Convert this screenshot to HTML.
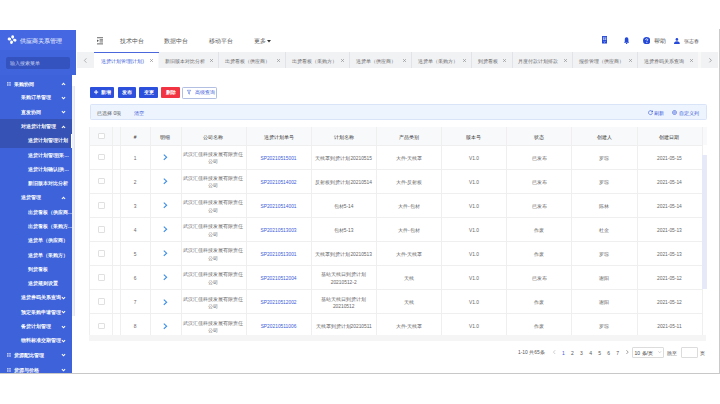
<!DOCTYPE html>
<html><head><meta charset="utf-8"><title>供应商关系管理</title>
<style>
*{box-sizing:border-box;margin:0;padding:0}
html,body{width:720px;height:404px;overflow:hidden;background:#fff;font-family:"Liberation Sans",sans-serif}
.a{position:absolute}
.t{position:absolute;white-space:nowrap;line-height:1}
.cell{position:absolute;line-height:7.5px;text-align:center;white-space:nowrap}
.cb{position:absolute;width:6.6px;height:6.6px;border:0.6px solid #e0e0e0;border-radius:1px;background:#fff}
.tofu .z{font-size:133.3%;line-height:0;position:relative;top:0.1em;-webkit-text-stroke:0.15px currentColor}
</style></head><body>
<div class="a" style="left:718.6px;top:29.4px;width:1.0px;height:344px;background:#cacaca;"></div>
<div class="a" style="left:0px;top:373px;width:720px;height:0.7px;background:#c8c8c8;"></div>
<div class="a" style="left:0px;top:29.5px;width:75.5px;height:20.2px;background:#4568e2;"></div>
<svg class="a" style="left:6px;top:33px;overflow:visible" width="12" height="13"><g fill="#fff"><ellipse cx="6.67" cy="3.91" rx="1.75" ry="1.45" transform="rotate(-78 6.67 3.91)"/><ellipse cx="8.79" cy="7.17" rx="1.75" ry="1.45" transform="rotate(12 8.79 7.17)"/><ellipse cx="5.53" cy="9.29" rx="1.75" ry="1.45" transform="rotate(102 5.53 9.29)"/><ellipse cx="3.41" cy="6.03" rx="1.75" ry="1.45" transform="rotate(192 3.41 6.03)"/></g></svg>
<div class="t" style="left:19.8px;top:37.75px;font-size:6.15px;color:#fff;"><span class="z">供应商关系管理</span></div>
<div class="a" style="left:0px;top:49.7px;width:75.5px;height:25.6px;background:#3f64dc;"></div>
<div class="a" style="left:6.2px;top:56.5px;width:63.4px;height:12.9px;background:#3553bf;border-radius:2px"></div>
<div class="t" style="left:10px;top:61.15px;font-size:5.3px;color:#c6d0ef;"><span class="z">输入搜索菜单</span></div>
<div class="a" style="left:0px;top:75.3px;width:71.8px;height:298px;background:#3d62d9;"></div>
<div class="a" style="left:71.8px;top:75.3px;width:3.7px;height:298px;background:#ffffff;"></div>
<div class="a" style="left:72.2px;top:86px;width:3.3px;height:230px;background:#eff1f9;border-right:0.5px solid #e3e6f2"></div>
<div class="t" style="left:14.0px;top:81.84px;font-size:5.3px;color:#fff;font-weight:bold"><span class="z">采购协同</span></div>
<svg class="a" style="left:7.0px;top:81.8px;overflow:visible" width="3.8" height="3.8"><g fill="#b8c6f2"><rect x="0" y="0" width="1.6" height="1.6"/><rect x="2.2" y="0" width="1.6" height="1.6"/><rect x="0" y="2.2" width="1.6" height="1.6"/><rect x="2.2" y="2.2" width="1.6" height="1.6"/></g></svg>
<svg class="a" style="left:61px;top:81.7px;overflow:visible" width="5" height="4"><path d="M0.9 3.0 L2.5 1.3 L4.1 3.0" stroke="#fff" stroke-width="1.05" fill="none"/></svg>
<div class="t" style="left:20.8px;top:96.36px;font-size:4.65px;color:#fff;font-weight:bold"><span class="z">采购订单管理</span></div>
<svg class="a" style="left:61px;top:95.99px;overflow:visible" width="5" height="4"><path d="M0.9 1.1 L2.5 2.8 L4.1 1.1" stroke="#fff" stroke-width="1.05" fill="none"/></svg>
<div class="t" style="left:20.8px;top:110.65px;font-size:4.65px;color:#fff;font-weight:bold"><span class="z">直发协同</span></div>
<svg class="a" style="left:61px;top:110.28px;overflow:visible" width="5" height="4"><path d="M0.9 1.1 L2.5 2.8 L4.1 1.1" stroke="#fff" stroke-width="1.05" fill="none"/></svg>
<div class="a" style="left:0px;top:119.42px;width:71.8px;height:14.29px;background:#3552b4;"></div>
<div class="t" style="left:20.8px;top:124.94px;font-size:4.65px;color:#fff;font-weight:bold"><span class="z">对送货计划管理</span></div>
<svg class="a" style="left:61px;top:124.57px;overflow:visible" width="5" height="4"><path d="M0.9 3.0 L2.5 1.3 L4.1 3.0" stroke="#fff" stroke-width="1.05" fill="none"/></svg>
<div class="a" style="left:0px;top:133.72px;width:71.8px;height:14.29px;background:#3552b4;"></div>
<div class="t" style="left:27.8px;top:139.23px;font-size:4.65px;color:#fff;font-weight:bold"><span class="z">送货计划管理计划</span></div>
<div class="t" style="left:27.8px;top:153.52px;font-size:4.65px;color:#fff;font-weight:bold"><span class="z">送货计划管理</span>(<span class="z">采</span>…</div>
<div class="t" style="left:27.8px;top:167.81px;font-size:4.65px;color:#fff;font-weight:bold"><span class="z">送货计划确认</span>(<span class="z">供</span>…</div>
<div class="t" style="left:27.8px;top:182.1px;font-size:4.65px;color:#fff;font-weight:bold"><span class="z">新旧版本对比分析</span></div>
<div class="t" style="left:20.8px;top:196.39px;font-size:4.65px;color:#fff;font-weight:bold"><span class="z">送货管理</span></div>
<svg class="a" style="left:61px;top:196.02px;overflow:visible" width="5" height="4"><path d="M0.9 3.0 L2.5 1.3 L4.1 3.0" stroke="#fff" stroke-width="1.05" fill="none"/></svg>
<div class="t" style="left:27.8px;top:210.68px;font-size:4.65px;color:#fff;font-weight:bold"><span class="z">出货看板（供应商</span>…</div>
<div class="t" style="left:27.8px;top:224.97px;font-size:4.65px;color:#fff;font-weight:bold"><span class="z">出货看板（采购方</span>…</div>
<div class="t" style="left:27.8px;top:239.26px;font-size:4.65px;color:#fff;font-weight:bold"><span class="z">送货单（供应商）</span></div>
<div class="t" style="left:27.8px;top:253.55px;font-size:4.65px;color:#fff;font-weight:bold"><span class="z">送货单（采购方）</span></div>
<div class="t" style="left:27.8px;top:267.84px;font-size:4.65px;color:#fff;font-weight:bold"><span class="z">到货看板</span></div>
<div class="t" style="left:27.8px;top:282.13px;font-size:4.65px;color:#fff;font-weight:bold"><span class="z">送货规则设置</span></div>
<div class="t" style="left:20.8px;top:296.42px;font-size:4.65px;color:#fff;font-weight:bold"><span class="z">送货券码关系查询</span></div>
<svg class="a" style="left:61px;top:296.05px;overflow:visible" width="5" height="4"><path d="M0.9 1.1 L2.5 2.8 L4.1 1.1" stroke="#fff" stroke-width="1.05" fill="none"/></svg>
<div class="t" style="left:20.8px;top:310.71px;font-size:4.65px;color:#fff;font-weight:bold"><span class="z">预定采购申请管理</span></div>
<svg class="a" style="left:61px;top:310.34px;overflow:visible" width="5" height="4"><path d="M0.9 1.1 L2.5 2.8 L4.1 1.1" stroke="#fff" stroke-width="1.05" fill="none"/></svg>
<div class="t" style="left:20.8px;top:325.0px;font-size:4.65px;color:#fff;font-weight:bold"><span class="z">备货计划管理</span></div>
<svg class="a" style="left:61px;top:324.63px;overflow:visible" width="5" height="4"><path d="M0.9 1.1 L2.5 2.8 L4.1 1.1" stroke="#fff" stroke-width="1.05" fill="none"/></svg>
<div class="t" style="left:20.8px;top:339.29px;font-size:4.65px;color:#fff;font-weight:bold"><span class="z">物料标准交期管理</span></div>
<svg class="a" style="left:61px;top:338.92px;overflow:visible" width="5" height="4"><path d="M0.9 1.1 L2.5 2.8 L4.1 1.1" stroke="#fff" stroke-width="1.05" fill="none"/></svg>
<div class="t" style="left:14.0px;top:353.35px;font-size:5.3px;color:#fff;font-weight:bold"><span class="z">货源配比管理</span></div>
<svg class="a" style="left:7.0px;top:353.31px;overflow:visible" width="3.8" height="3.8"><g fill="#b8c6f2"><rect x="0" y="0" width="1.6" height="1.6"/><rect x="2.2" y="0" width="1.6" height="1.6"/><rect x="0" y="2.2" width="1.6" height="1.6"/><rect x="2.2" y="2.2" width="1.6" height="1.6"/></g></svg>
<svg class="a" style="left:61px;top:353.21px;overflow:visible" width="5" height="4"><path d="M0.9 1.1 L2.5 2.8 L4.1 1.1" stroke="#fff" stroke-width="1.05" fill="none"/></svg>
<div class="t" style="left:14.0px;top:367.64px;font-size:5.3px;color:#fff;font-weight:bold"><span class="z">货源与价格</span></div>
<svg class="a" style="left:7.0px;top:367.6px;overflow:visible" width="3.8" height="3.8"><g fill="#b8c6f2"><rect x="0" y="0" width="1.6" height="1.6"/><rect x="2.2" y="0" width="1.6" height="1.6"/><rect x="0" y="2.2" width="1.6" height="1.6"/><rect x="2.2" y="2.2" width="1.6" height="1.6"/></g></svg>
<svg class="a" style="left:61px;top:367.5px;overflow:visible" width="5" height="4"><path d="M0.9 1.1 L2.5 2.8 L4.1 1.1" stroke="#fff" stroke-width="1.05" fill="none"/></svg>
<div class="a" style="left:70.9px;top:133.72px;width:0.9px;height:14.29px;background:#ffffff;"></div>
<svg class="a" style="left:96.5px;top:37px" width="6.8" height="7.5" viewBox="0 0 68 75"><g fill="#8a8a8a">
<rect x="0" y="0" width="68" height="13"/><rect x="0" y="62" width="68" height="13"/><rect x="26" y="21" width="42" height="10"/><rect x="26" y="33" width="42" height="10"/><rect x="26" y="45" width="42" height="10"/></g><path d="M2 24 L18 37.5 L2 51Z" fill="#333"/></svg>
<div class="t" style="left:119.7px;top:39.12px;font-size:5.95px;color:#555;"><span class="z">技术中台</span></div>
<div class="t" style="left:164px;top:39.12px;font-size:5.95px;color:#555;"><span class="z">数据中台</span></div>
<div class="t" style="left:208.9px;top:39.12px;font-size:5.95px;color:#555;"><span class="z">移动平台</span></div>
<div class="t" style="left:253.7px;top:39.12px;font-size:5.95px;color:#555;"><span class="z">更多</span></div>
<svg class="a" style="left:266.6px;top:40px;overflow:visible" width="4" height="3"><path d="M0 0 L4 0 L2 2.6Z" fill="#333"/></svg>
<svg class="a" style="left:601.8px;top:36.3px" width="5.2" height="7.5" viewBox="0 0 52 75"><rect x="0" y="0" width="52" height="75" rx="3" fill="#2448d8"/><rect x="9" y="9" width="34" height="31" fill="#aebdf0"/><rect x="15" y="15" width="22" height="7" fill="#2448d8"/><rect x="23" y="22" width="6" height="14" fill="#2448d8"/><path d="M16 53 L26 61 L36 53" stroke="#fff" stroke-width="6" fill="none"/></svg>
<svg class="a" style="left:623.9px;top:36.8px" width="5.2" height="7.1" viewBox="0 0 52 71"><g fill="#2448d8"><path d="M26 2 C41 2 44 14 44 26 V46 L52 58 H0 L8 46 V26 C8 14 11 2 26 2Z"/><rect x="18" y="61" width="16" height="9" rx="4"/></g></svg>
<svg class="a" style="left:643.2px;top:37.0px" width="7.3" height="7.3" viewBox="0 0 16 16"><circle cx="8" cy="8" r="8" fill="#2448d8"/><path d="M5.7 6.3 C5.7 4.7 6.8 3.9 8 3.9 C9.3 3.9 10.3 4.7 10.3 5.9 C10.3 7.5 8.5 7.7 8.5 9.3" stroke="#fff" stroke-width="1.8" fill="none"/><circle cx="8.5" cy="11.9" r="1.15" fill="#fff"/></svg>
<svg class="a" style="left:674.4px;top:37.8px" width="5.8" height="6" viewBox="0 0 58 60"><g fill="#2448d8"><circle cx="29" cy="14" r="13"/><path d="M0 60 C0 42 10 33 29 33 C48 33 58 42 58 60Z"/></g></svg>
<div class="t" style="left:654.2px;top:38.68px;font-size:5.5px;color:#555;"><span class="z">帮助</span></div>
<div class="t" style="left:684.2px;top:38.71px;font-size:5.4px;color:#555;"><span class="z">张志春</span></div>
<div class="a" style="left:77.3px;top:52px;width:640.9px;height:15.5px;background:#f1f2f4;"></div>
<svg class="a" style="left:84px;top:58.2px;overflow:visible" width="3" height="5"><path d="M2.4 0.3 L0.4 2.5 L2.4 4.7" stroke="#8a8a8a" stroke-width="0.6" fill="none"/></svg>
<div class="a" style="left:94px;top:52px;width:64.5px;height:16.0px;background:#fff;"></div>
<div class="a" style="left:158.2px;top:52px;width:0.6px;height:15.5px;background:#f7f8fa;"></div>
<div class="t" style="left:100.6px;top:59.18px;font-size:5.2px;color:#3a5bd9;"><span class="z">送货计划管理</span>(<span class="z">计划</span>)</div>
<svg class="a" style="left:150.1px;top:59.2px;overflow:visible" width="3.0" height="3.0"><path d="M0 0 L3.0 3.0 M3.0 0 L0 3.0" stroke="#8a8a8a" stroke-width="0.6"/></svg>
<div class="a" style="left:218.0px;top:52px;width:0.6px;height:15.5px;background:#e1e3e8;"></div>
<div class="t" style="left:165.1px;top:59.18px;font-size:5.2px;color:#666;"><span class="z">新旧版本对比分析</span></div>
<svg class="a" style="left:209.9px;top:59.2px;overflow:visible" width="3.0" height="3.0"><path d="M0 0 L3.0 3.0 M3.0 0 L0 3.0" stroke="#8a8a8a" stroke-width="0.6"/></svg>
<div class="a" style="left:284.7px;top:52px;width:0.6px;height:15.5px;background:#e1e3e8;"></div>
<div class="t" style="left:224.9px;top:59.18px;font-size:5.2px;color:#666;"><span class="z">出货看板（供应商）</span></div>
<svg class="a" style="left:276.6px;top:59.2px;overflow:visible" width="3.0" height="3.0"><path d="M0 0 L3.0 3.0 M3.0 0 L0 3.0" stroke="#8a8a8a" stroke-width="0.6"/></svg>
<div class="a" style="left:349.0px;top:52px;width:0.6px;height:15.5px;background:#e1e3e8;"></div>
<div class="t" style="left:291.6px;top:59.18px;font-size:5.2px;color:#666;"><span class="z">出货看板（采购方）</span></div>
<svg class="a" style="left:340.9px;top:59.2px;overflow:visible" width="3.0" height="3.0"><path d="M0 0 L3.0 3.0 M3.0 0 L0 3.0" stroke="#8a8a8a" stroke-width="0.6"/></svg>
<div class="a" style="left:410.7px;top:52px;width:0.6px;height:15.5px;background:#e1e3e8;"></div>
<div class="t" style="left:355.9px;top:59.18px;font-size:5.2px;color:#666;"><span class="z">送货单（供应商）</span></div>
<svg class="a" style="left:402.6px;top:59.2px;overflow:visible" width="3.0" height="3.0"><path d="M0 0 L3.0 3.0 M3.0 0 L0 3.0" stroke="#8a8a8a" stroke-width="0.6"/></svg>
<div class="a" style="left:471.0px;top:52px;width:0.6px;height:15.5px;background:#e1e3e8;"></div>
<div class="t" style="left:417.6px;top:59.18px;font-size:5.2px;color:#666;"><span class="z">送货单（采购方）</span></div>
<svg class="a" style="left:462.9px;top:59.2px;overflow:visible" width="3.0" height="3.0"><path d="M0 0 L3.0 3.0 M3.0 0 L0 3.0" stroke="#8a8a8a" stroke-width="0.6"/></svg>
<div class="a" style="left:511.5px;top:52px;width:0.6px;height:15.5px;background:#e1e3e8;"></div>
<div class="t" style="left:477.9px;top:59.18px;font-size:5.2px;color:#666;"><span class="z">到货看板</span></div>
<svg class="a" style="left:503.4px;top:59.2px;overflow:visible" width="3.0" height="3.0"><path d="M0 0 L3.0 3.0 M3.0 0 L0 3.0" stroke="#8a8a8a" stroke-width="0.6"/></svg>
<div class="a" style="left:571.6px;top:52px;width:0.6px;height:15.5px;background:#e1e3e8;"></div>
<div class="t" style="left:518.4px;top:59.18px;font-size:5.2px;color:#666;"><span class="z">月度付款计划排款</span></div>
<svg class="a" style="left:563.5px;top:59.2px;overflow:visible" width="3.0" height="3.0"><path d="M0 0 L3.0 3.0 M3.0 0 L0 3.0" stroke="#8a8a8a" stroke-width="0.6"/></svg>
<div class="a" style="left:637.3px;top:52px;width:0.6px;height:15.5px;background:#e1e3e8;"></div>
<div class="t" style="left:578.5px;top:59.18px;font-size:5.2px;color:#666;"><span class="z">报价管理（供应商）</span></div>
<svg class="a" style="left:629.2px;top:59.2px;overflow:visible" width="3.0" height="3.0"><path d="M0 0 L3.0 3.0 M3.0 0 L0 3.0" stroke="#8a8a8a" stroke-width="0.6"/></svg>
<div class="a" style="left:697.7px;top:52px;width:0.6px;height:15.5px;background:#e1e3e8;"></div>
<div class="t" style="left:644.2px;top:59.18px;font-size:5.2px;color:#666;"><span class="z">送货券码关系查询</span></div>
<svg class="a" style="left:689.6px;top:59.2px;overflow:visible" width="3.0" height="3.0"><path d="M0 0 L3.0 3.0 M3.0 0 L0 3.0" stroke="#8a8a8a" stroke-width="0.6"/></svg>
<div class="a" style="left:94px;top:52px;width:64.5px;height:0.9px;background:#4a67dc;"></div>
<div class="a" style="left:698.3px;top:52px;width:3.2px;height:15.5px;background:#f8f8f9;"></div>
<svg class="a" style="left:709.4px;top:58.4px;overflow:visible" width="3" height="5"><path d="M0.4 0.3 L2.4 2.3 L0.4 4.3" stroke="#8a8a8a" stroke-width="0.75" fill="none"/></svg>
<div class="a" style="left:89.5px;top:87.25px;width:24.7px;height:10.75px;background:#2c4fdc;border-radius:1px"></div>
<svg class="a" style="left:93.8px;top:90.3px;overflow:visible" width="4.2" height="4.2"><path d="M2.1 0 V4.2 M0 2.1 H4.2" stroke="#fff" stroke-width="1.0"/></svg>
<div class="t" style="left:101.1px;top:90.89px;font-size:4.6px;color:#fff;font-weight:bold"><span class="z">新增</span></div>
<div class="a" style="left:117.6px;top:87.25px;width:18.4px;height:10.75px;background:#2c4fdc;border-radius:1px"></div>
<div class="t" style="left:122.2px;top:90.89px;font-size:4.6px;color:#fff;font-weight:bold"><span class="z">发布</span></div>
<div class="a" style="left:139.1px;top:87.25px;width:18.9px;height:10.75px;background:#2c4fdc;border-radius:1px"></div>
<div class="t" style="left:143.95px;top:90.89px;font-size:4.6px;color:#fff;font-weight:bold"><span class="z">变更</span></div>
<div class="a" style="left:161.3px;top:87.25px;width:18.5px;height:10.75px;background:#f23342;border-radius:1px"></div>
<div class="t" style="left:165.95px;top:90.89px;font-size:4.6px;color:#fff;font-weight:bold"><span class="z">删除</span></div>
<div class="a" style="left:182.3px;top:86.7px;width:34.8px;height:11.9px;background:#fff;border:0.75px solid #b3bfe2;border-radius:1.2px"></div>
<svg class="a" style="left:187.3px;top:90.4px;overflow:visible" width="4" height="4.6"><path d="M0.3 0.3 H3.7 L2.4 2.1 V4.2 L1.6 3.6 V2.1Z" stroke="#3a5bd9" stroke-width="0.5" fill="none"/></svg>
<div class="t" style="left:194.5px;top:91.01px;font-size:4.55px;color:#3a5bd9;"><span class="z">高级查询</span></div>
<div class="a" style="left:89.5px;top:104px;width:617.2px;height:16.3px;background:#edf4fe;border:0.6px solid #d9e4f8;border-radius:1.5px"></div>
<div class="t" style="left:97px;top:110.65px;font-size:5.0px;color:#555;"><span class="z">已选择</span> 0<span class="z">项</span></div>
<div class="t" style="left:133.7px;top:110.65px;font-size:5.0px;color:#3a5bd9;"><span class="z">清空</span></div>
<svg class="a" style="left:647.8px;top:109.8px;overflow:visible" width="5" height="5" viewBox="0 0 10 10"><path d="M8.7 3.6 A4 4 0 1 0 8.9 6.3" stroke="#3a5bd9" stroke-width="1.3" fill="none"/><path d="M9.8 0.6 V4.4 H6.0Z" fill="#3a5bd9"/></svg>
<svg class="a" style="left:672.4px;top:109.8px;overflow:visible" width="5" height="5" viewBox="0 0 10 10"><circle cx="5" cy="5" r="4" stroke="#3a5bd9" stroke-width="1.3" fill="none"/><circle cx="5" cy="5" r="1.5" stroke="#3a5bd9" stroke-width="1.1" fill="none"/></svg>
<div class="t" style="left:654.2px;top:110.65px;font-size:5.0px;color:#3a5bd9;"><span class="z">刷新</span></div>
<div class="t" style="left:678.8px;top:110.65px;font-size:5.0px;color:#3a5bd9;"><span class="z">自定义列</span></div>
<div class="a" style="left:89.7px;top:127px;width:617.0px;height:18.0px;background:#f8f9fa;"></div>
<div class="a" style="left:89.7px;top:145.0px;width:612.3px;height:0.6px;background:#efefef;"></div>
<div class="a" style="left:89.7px;top:168.81px;width:612.3px;height:0.6px;background:#efefef;"></div>
<div class="a" style="left:89.7px;top:192.92px;width:612.3px;height:0.6px;background:#efefef;"></div>
<div class="a" style="left:89.7px;top:217.03px;width:612.3px;height:0.6px;background:#efefef;"></div>
<div class="a" style="left:89.7px;top:241.14px;width:612.3px;height:0.6px;background:#efefef;"></div>
<div class="a" style="left:89.7px;top:265.25px;width:612.3px;height:0.6px;background:#efefef;"></div>
<div class="a" style="left:89.7px;top:289.36px;width:612.3px;height:0.6px;background:#efefef;"></div>
<div class="a" style="left:89.7px;top:313.47px;width:612.3px;height:0.6px;background:#efefef;"></div>
<div class="a" style="left:89.4px;top:127px;width:0.6px;height:207.8px;background:#efefef;"></div>
<div class="a" style="left:112.4px;top:127px;width:0.6px;height:207.8px;background:#efefef;"></div>
<div class="a" style="left:119.9px;top:127px;width:0.6px;height:207.8px;background:#efefef;"></div>
<div class="a" style="left:149.8px;top:127px;width:0.6px;height:207.8px;background:#efefef;"></div>
<div class="a" style="left:180.5px;top:127px;width:0.6px;height:207.8px;background:#efefef;"></div>
<div class="a" style="left:245.65px;top:127px;width:0.6px;height:207.8px;background:#efefef;"></div>
<div class="a" style="left:310.8px;top:127px;width:0.6px;height:207.8px;background:#efefef;"></div>
<div class="a" style="left:375.95px;top:127px;width:0.6px;height:207.8px;background:#efefef;"></div>
<div class="a" style="left:441.1px;top:127px;width:0.6px;height:207.8px;background:#efefef;"></div>
<div class="a" style="left:506.25px;top:127px;width:0.6px;height:207.8px;background:#efefef;"></div>
<div class="a" style="left:571.4px;top:127px;width:0.6px;height:207.8px;background:#efefef;"></div>
<div class="a" style="left:636.55px;top:127px;width:0.6px;height:207.8px;background:#efefef;"></div>
<div class="a" style="left:701.7px;top:127px;width:0.6px;height:207.8px;background:#efefef;"></div>
<div class="a" style="left:706.4px;top:145.0px;width:0.6px;height:189.8px;background:#f3f3f3;"></div>
<div class="a" style="left:702.6px;top:145.0px;width:4.1px;height:189.8px;background:#fff;"></div>
<div class="a" style="left:702.2px;top:155px;width:4.5px;height:134px;background:#e6eaf8;"></div>
<div class="a" style="left:89.4px;top:334.8px;width:616.9px;height:6.1px;background:#f5f5f6;"></div>
<div class="cb" style="left:98px;top:132.7px"></div>
<div class="cell" style="left:120.2px;top:133.55px;width:29.9px;font-size:4.9px;color:#333;">#</div>
<div class="cell" style="left:150.1px;top:133.55px;width:30.7px;font-size:4.9px;color:#333;"><span class="z">明细</span></div>
<div class="cell" style="left:180.8px;top:133.55px;width:65.15px;font-size:4.9px;color:#333;"><span class="z">公司名称</span></div>
<div class="cell" style="left:245.95px;top:133.55px;width:65.15px;font-size:4.9px;color:#333;"><span class="z">送货计划单号</span></div>
<div class="cell" style="left:311.1px;top:133.55px;width:65.15px;font-size:4.9px;color:#333;"><span class="z">计划名称</span></div>
<div class="cell" style="left:376.25px;top:133.55px;width:65.15px;font-size:4.9px;color:#333;"><span class="z">产品类别</span></div>
<div class="cell" style="left:441.4px;top:133.55px;width:65.15px;font-size:4.9px;color:#333;"><span class="z">版本号</span></div>
<div class="cell" style="left:506.55px;top:133.55px;width:65.15px;font-size:4.9px;color:#333;"><span class="z">状态</span></div>
<div class="cell" style="left:571.7px;top:133.55px;width:65.15px;font-size:4.9px;color:#333;"><span class="z">创建人</span></div>
<div class="cell" style="left:636.85px;top:133.55px;width:65.15px;font-size:4.9px;color:#333;"><span class="z">创建日期</span></div>
<div class="cb" style="left:98px;top:153.75px"></div>
<div class="cell" style="left:120.2px;top:154.61px;width:29.9px;font-size:4.85px;color:#666;">1</div>
<svg class="a" style="left:163.2px;top:153.86px;overflow:visible" width="4.4" height="6.4"><path d="M0.8 0.6 L3.6 3.2 L0.8 5.8" stroke="#3b8de8" stroke-width="1.15" fill="none"/></svg>
<div class="cell" style="left:180.8px;top:150.86px;width:65.15px;font-size:4.85px;color:#666;"><span class="z">武汉汇佳科技发展有限责任</span><br><span class="z">公司</span></div>
<div class="cell" style="left:245.95px;top:154.61px;width:65.15px;font-size:4.85px;color:#3a5bd9;">SP20210515001</div>
<div class="cell" style="left:311.1px;top:154.61px;width:65.15px;font-size:4.85px;color:#666;"><span class="z">天线罩到货计划</span>20210515</div>
<div class="cell" style="left:376.25px;top:154.61px;width:65.15px;font-size:4.85px;color:#666;"><span class="z">大件</span>-<span class="z">天线罩</span></div>
<div class="cell" style="left:441.4px;top:154.61px;width:65.15px;font-size:4.85px;color:#666;">V1.0</div>
<div class="cell" style="left:506.55px;top:154.61px;width:65.15px;font-size:4.85px;color:#666;"><span class="z">已发布</span></div>
<div class="cell" style="left:571.7px;top:154.61px;width:65.15px;font-size:4.85px;color:#666;"><span class="z">罗琼</span></div>
<div class="cell" style="left:636.85px;top:154.61px;width:65.15px;font-size:4.85px;color:#666;">2021-05-15</div>
<div class="cb" style="left:98px;top:177.87px"></div>
<div class="cell" style="left:120.2px;top:178.72px;width:29.9px;font-size:4.85px;color:#666;">2</div>
<svg class="a" style="left:163.2px;top:177.97px;overflow:visible" width="4.4" height="6.4"><path d="M0.8 0.6 L3.6 3.2 L0.8 5.8" stroke="#3b8de8" stroke-width="1.15" fill="none"/></svg>
<div class="cell" style="left:180.8px;top:174.97px;width:65.15px;font-size:4.85px;color:#666;"><span class="z">武汉汇佳科技发展有限责任</span><br><span class="z">公司</span></div>
<div class="cell" style="left:245.95px;top:178.72px;width:65.15px;font-size:4.85px;color:#3a5bd9;">SP20210514002</div>
<div class="cell" style="left:311.1px;top:178.72px;width:65.15px;font-size:4.85px;color:#666;"><span class="z">反射板到货计划</span>20210514</div>
<div class="cell" style="left:376.25px;top:178.72px;width:65.15px;font-size:4.85px;color:#666;"><span class="z">大件</span>-<span class="z">反射板</span></div>
<div class="cell" style="left:441.4px;top:178.72px;width:65.15px;font-size:4.85px;color:#666;">V1.0</div>
<div class="cell" style="left:506.55px;top:178.72px;width:65.15px;font-size:4.85px;color:#666;"><span class="z">已发布</span></div>
<div class="cell" style="left:571.7px;top:178.72px;width:65.15px;font-size:4.85px;color:#666;"><span class="z">罗琼</span></div>
<div class="cell" style="left:636.85px;top:178.72px;width:65.15px;font-size:4.85px;color:#666;">2021-05-14</div>
<div class="cb" style="left:98px;top:201.97px"></div>
<div class="cell" style="left:120.2px;top:202.83px;width:29.9px;font-size:4.85px;color:#666;">3</div>
<svg class="a" style="left:163.2px;top:202.08px;overflow:visible" width="4.4" height="6.4"><path d="M0.8 0.6 L3.6 3.2 L0.8 5.8" stroke="#3b8de8" stroke-width="1.15" fill="none"/></svg>
<div class="cell" style="left:180.8px;top:199.08px;width:65.15px;font-size:4.85px;color:#666;"><span class="z">武汉汇佳科技发展有限责任</span><br><span class="z">公司</span></div>
<div class="cell" style="left:245.95px;top:202.83px;width:65.15px;font-size:4.85px;color:#3a5bd9;">SP20210514001</div>
<div class="cell" style="left:311.1px;top:202.83px;width:65.15px;font-size:4.85px;color:#666;"><span class="z">包材</span>5-14</div>
<div class="cell" style="left:376.25px;top:202.83px;width:65.15px;font-size:4.85px;color:#666;"><span class="z">大件</span>-<span class="z">包材</span></div>
<div class="cell" style="left:441.4px;top:202.83px;width:65.15px;font-size:4.85px;color:#666;">V1.0</div>
<div class="cell" style="left:506.55px;top:202.83px;width:65.15px;font-size:4.85px;color:#666;"><span class="z">已发布</span></div>
<div class="cell" style="left:571.7px;top:202.83px;width:65.15px;font-size:4.85px;color:#666;"><span class="z">陈林</span></div>
<div class="cell" style="left:636.85px;top:202.83px;width:65.15px;font-size:4.85px;color:#666;">2021-05-14</div>
<div class="cb" style="left:98px;top:226.08px"></div>
<div class="cell" style="left:120.2px;top:226.94px;width:29.9px;font-size:4.85px;color:#666;">4</div>
<svg class="a" style="left:163.2px;top:226.19px;overflow:visible" width="4.4" height="6.4"><path d="M0.8 0.6 L3.6 3.2 L0.8 5.8" stroke="#3b8de8" stroke-width="1.15" fill="none"/></svg>
<div class="cell" style="left:180.8px;top:223.19px;width:65.15px;font-size:4.85px;color:#666;"><span class="z">武汉汇佳科技发展有限责任</span><br><span class="z">公司</span></div>
<div class="cell" style="left:245.95px;top:226.94px;width:65.15px;font-size:4.85px;color:#3a5bd9;">SP20210513003</div>
<div class="cell" style="left:311.1px;top:226.94px;width:65.15px;font-size:4.85px;color:#666;"><span class="z">包材</span>5-13</div>
<div class="cell" style="left:376.25px;top:226.94px;width:65.15px;font-size:4.85px;color:#666;"><span class="z">大件</span>-<span class="z">包材</span></div>
<div class="cell" style="left:441.4px;top:226.94px;width:65.15px;font-size:4.85px;color:#666;">V1.0</div>
<div class="cell" style="left:506.55px;top:226.94px;width:65.15px;font-size:4.85px;color:#666;"><span class="z">作废</span></div>
<div class="cell" style="left:571.7px;top:226.94px;width:65.15px;font-size:4.85px;color:#666;"><span class="z">杜金</span></div>
<div class="cell" style="left:636.85px;top:226.94px;width:65.15px;font-size:4.85px;color:#666;">2021-05-13</div>
<div class="cb" style="left:98px;top:250.19px"></div>
<div class="cell" style="left:120.2px;top:251.05px;width:29.9px;font-size:4.85px;color:#666;">5</div>
<svg class="a" style="left:163.2px;top:250.3px;overflow:visible" width="4.4" height="6.4"><path d="M0.8 0.6 L3.6 3.2 L0.8 5.8" stroke="#3b8de8" stroke-width="1.15" fill="none"/></svg>
<div class="cell" style="left:180.8px;top:247.3px;width:65.15px;font-size:4.85px;color:#666;"><span class="z">武汉汇佳科技发展有限责任</span><br><span class="z">公司</span></div>
<div class="cell" style="left:245.95px;top:251.05px;width:65.15px;font-size:4.85px;color:#3a5bd9;">SP20210513001</div>
<div class="cell" style="left:311.1px;top:251.05px;width:65.15px;font-size:4.85px;color:#666;"><span class="z">天线罩到货计划</span>20210513</div>
<div class="cell" style="left:376.25px;top:251.05px;width:65.15px;font-size:4.85px;color:#666;"><span class="z">大件</span>-<span class="z">天线罩</span></div>
<div class="cell" style="left:441.4px;top:251.05px;width:65.15px;font-size:4.85px;color:#666;">V1.0</div>
<div class="cell" style="left:506.55px;top:251.05px;width:65.15px;font-size:4.85px;color:#666;"><span class="z">作废</span></div>
<div class="cell" style="left:571.7px;top:251.05px;width:65.15px;font-size:4.85px;color:#666;"><span class="z">罗琼</span></div>
<div class="cell" style="left:636.85px;top:251.05px;width:65.15px;font-size:4.85px;color:#666;">2021-05-13</div>
<div class="cb" style="left:98px;top:274.31px"></div>
<div class="cell" style="left:120.2px;top:275.16px;width:29.9px;font-size:4.85px;color:#666;">6</div>
<svg class="a" style="left:163.2px;top:274.41px;overflow:visible" width="4.4" height="6.4"><path d="M0.8 0.6 L3.6 3.2 L0.8 5.8" stroke="#3b8de8" stroke-width="1.15" fill="none"/></svg>
<div class="cell" style="left:180.8px;top:271.41px;width:65.15px;font-size:4.85px;color:#666;"><span class="z">武汉汇佳科技发展有限责任</span><br><span class="z">公司</span></div>
<div class="cell" style="left:245.95px;top:275.16px;width:65.15px;font-size:4.85px;color:#3a5bd9;">SP20210512004</div>
<div class="cell" style="left:311.1px;top:271.41px;width:65.15px;font-size:4.85px;color:#666;"><span class="z">基站天线日到货计划</span><br>20210512-2</div>
<div class="cell" style="left:376.25px;top:275.16px;width:65.15px;font-size:4.85px;color:#666;"><span class="z">天线</span></div>
<div class="cell" style="left:441.4px;top:275.16px;width:65.15px;font-size:4.85px;color:#666;">V1.0</div>
<div class="cell" style="left:506.55px;top:275.16px;width:65.15px;font-size:4.85px;color:#666;"><span class="z">已发布</span></div>
<div class="cell" style="left:571.7px;top:275.16px;width:65.15px;font-size:4.85px;color:#666;"><span class="z">谢阳</span></div>
<div class="cell" style="left:636.85px;top:275.16px;width:65.15px;font-size:4.85px;color:#666;">2021-05-12</div>
<div class="cb" style="left:98px;top:298.41px"></div>
<div class="cell" style="left:120.2px;top:299.26px;width:29.9px;font-size:4.85px;color:#666;">7</div>
<svg class="a" style="left:163.2px;top:298.51px;overflow:visible" width="4.4" height="6.4"><path d="M0.8 0.6 L3.6 3.2 L0.8 5.8" stroke="#3b8de8" stroke-width="1.15" fill="none"/></svg>
<div class="cell" style="left:180.8px;top:295.51px;width:65.15px;font-size:4.85px;color:#666;"><span class="z">武汉汇佳科技发展有限责任</span><br><span class="z">公司</span></div>
<div class="cell" style="left:245.95px;top:299.26px;width:65.15px;font-size:4.85px;color:#3a5bd9;">SP20210512002</div>
<div class="cell" style="left:311.1px;top:295.51px;width:65.15px;font-size:4.85px;color:#666;"><span class="z">基站天线日到货计划</span><br>20210512</div>
<div class="cell" style="left:376.25px;top:299.26px;width:65.15px;font-size:4.85px;color:#666;"><span class="z">天线</span></div>
<div class="cell" style="left:441.4px;top:299.26px;width:65.15px;font-size:4.85px;color:#666;">V1.0</div>
<div class="cell" style="left:506.55px;top:299.26px;width:65.15px;font-size:4.85px;color:#666;"><span class="z">作废</span></div>
<div class="cell" style="left:571.7px;top:299.26px;width:65.15px;font-size:4.85px;color:#666;"><span class="z">谢阳</span></div>
<div class="cell" style="left:636.85px;top:299.26px;width:65.15px;font-size:4.85px;color:#666;">2021-05-12</div>
<div class="cb" style="left:98px;top:322.52px"></div>
<div class="cell" style="left:120.2px;top:323.38px;width:29.9px;font-size:4.85px;color:#666;">8</div>
<svg class="a" style="left:163.2px;top:322.62px;overflow:visible" width="4.4" height="6.4"><path d="M0.8 0.6 L3.6 3.2 L0.8 5.8" stroke="#3b8de8" stroke-width="1.15" fill="none"/></svg>
<div class="cell" style="left:180.8px;top:319.62px;width:65.15px;font-size:4.85px;color:#666;"><span class="z">武汉汇佳科技发展有限责任</span><br><span class="z">公司</span></div>
<div class="cell" style="left:245.95px;top:323.38px;width:65.15px;font-size:4.85px;color:#3a5bd9;">SP20210511006</div>
<div class="cell" style="left:311.1px;top:323.38px;width:65.15px;font-size:4.85px;color:#666;"><span class="z">天线罩到货计划</span>20210511</div>
<div class="cell" style="left:376.25px;top:323.38px;width:65.15px;font-size:4.85px;color:#666;"><span class="z">大件</span>-<span class="z">天线罩</span></div>
<div class="cell" style="left:441.4px;top:323.38px;width:65.15px;font-size:4.85px;color:#666;">V1.0</div>
<div class="cell" style="left:506.55px;top:323.38px;width:65.15px;font-size:4.85px;color:#666;"><span class="z">作废</span></div>
<div class="cell" style="left:571.7px;top:323.38px;width:65.15px;font-size:4.85px;color:#666;"><span class="z">罗琼</span></div>
<div class="cell" style="left:636.85px;top:323.38px;width:65.15px;font-size:4.85px;color:#666;">2021-05-11</div>
<div class="t" style="left:518px;top:350.69px;font-size:4.9px;color:#555;">1-10 <span class="z">共</span>65<span class="z">条</span></div>
<svg class="a" style="left:553px;top:350.29999999999995px;overflow:visible" width="2.6" height="4.2"><path d="M2.2 0.2 L0.4 2.1 L2.2 4.0" stroke="#aaa" stroke-width="0.55" fill="none"/></svg>
<div class="t" style="left:562.0px;top:350.65px;font-size:5.0px;color:#3a5bd9;">1</div>
<div class="t" style="left:571.05px;top:350.65px;font-size:5.0px;color:#555;">2</div>
<div class="t" style="left:580.1px;top:350.65px;font-size:5.0px;color:#555;">3</div>
<div class="t" style="left:589.15px;top:350.65px;font-size:5.0px;color:#555;">4</div>
<div class="t" style="left:598.2px;top:350.65px;font-size:5.0px;color:#555;">5</div>
<div class="t" style="left:607.25px;top:350.65px;font-size:5.0px;color:#555;">6</div>
<div class="t" style="left:616.3px;top:350.65px;font-size:5.0px;color:#555;">7</div>
<svg class="a" style="left:625.6px;top:350.29999999999995px;overflow:visible" width="2.6" height="4.2"><path d="M0.4 0.2 L2.2 2.1 L0.4 4.0" stroke="#555" stroke-width="0.55" fill="none"/></svg>
<div class="a" style="left:632.4px;top:347.4px;width:31.8px;height:10.2px;background:#fff;border:0.6px solid #dcdcdc;border-radius:1px"></div>
<div class="t" style="left:634.6px;top:350.65px;font-size:5.0px;color:#444;">10 <span class="z">条</span>/<span class="z">页</span></div>
<svg class="a" style="left:657.6px;top:351.4px;overflow:visible" width="3.4" height="2.4"><path d="M0.3 0.3 L1.7 1.8 L3.1 0.3" stroke="#aaa" stroke-width="0.5" fill="none"/></svg>
<div class="t" style="left:667.0px;top:350.58px;font-size:5.2px;color:#555;"><span class="z">跳至</span></div>
<div class="a" style="left:681.4px;top:347.4px;width:16.2px;height:10.2px;background:#fff;border:0.6px solid #dcdcdc;border-radius:1px"></div>
<div class="t" style="left:700.4px;top:350.58px;font-size:5.2px;color:#555;"><span class="z">页</span></div>
<script>
(function(){var s=document.createElement('span');s.style.cssText='position:absolute;left:-9999px;top:0;font:100px "Liberation Sans",sans-serif;white-space:nowrap';s.textContent='\u4e2d\u4e2d\u4e2d\u4e2d';document.body.appendChild(s);var w=s.getBoundingClientRect().width;document.body.removeChild(s);if(w<350){document.documentElement.className+=' tofu';}})();
</script>
</body></html>
